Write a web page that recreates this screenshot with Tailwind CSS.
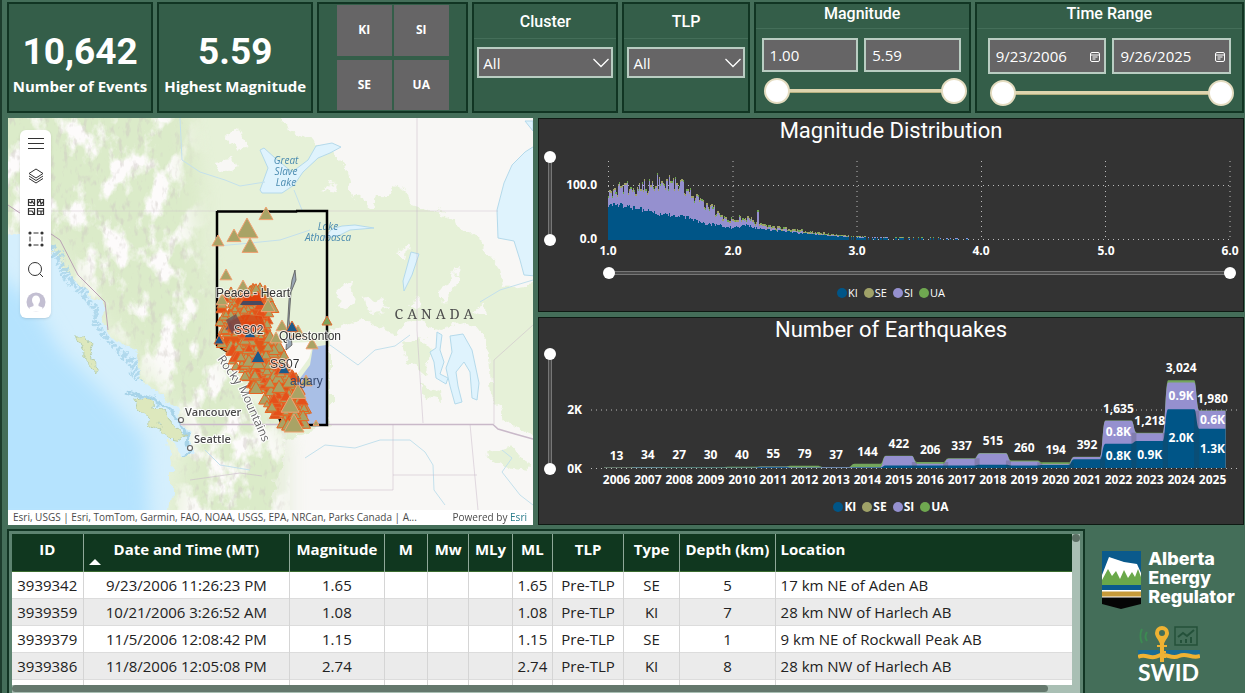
<!DOCTYPE html>
<html lang="en">
<head>
    <meta charset="UTF-8">
    <meta name="viewport" content="width=device-width, initial-scale=1.0">
    <title>Alberta Earthquake Dashboard</title>
    <script src="https://cdn.jsdelivr.net/npm/@tailwindcss/browser@4"></script>
</head>
<body class="bg-[#446e59] text-white font-['Open_Sans','Noto_Sans',sans-serif] border-l-2 border-[#1d3d2d] pl-[5px] pr-px pt-0.5 min-h-screen overflow-hidden">

    <!-- Cards and filters -->
    <section class="grid grid-cols-[minmax(0,146fr)_minmax(0,156fr)_minmax(0,151fr)_minmax(0,146fr)_minmax(0,127fr)_minmax(0,217fr)_minmax(0,269fr)] gap-1 h-[111px]">
        <div class="bg-[#345e49] border-2 border-[#113523] text-center whitespace-nowrap">
            <p class="font-['Roboto',sans-serif] font-bold text-[37px] leading-10 pt-7">10,642</p>
            <p class="font-bold text-[15px] leading-5 pt-1">Number of Events</p>
        </div>
        <div class="bg-[#345e49] border-2 border-[#113523] text-center whitespace-nowrap">
            <p class="font-['Roboto',sans-serif] font-bold text-[37px] leading-10 pt-7">5.59</p>
            <p class="font-bold text-[15px] leading-5 pt-1">Highest Magnitude</p>
        </div>
        <div class="bg-[#345e49] border-2 border-[#113523] flex justify-center">
            <div class="grid grid-cols-2 gap-x-0.5 gap-y-1 w-28 my-px text-xs font-bold">
                <button class="bg-[#666566]">KI</button>
                <button class="bg-[#666566]">SI</button>
                <button class="bg-[#666566]">SE</button>
                <button class="bg-[#666566]">UA</button>
            </div>
        </div>
        <div class="bg-[#345e49] border-2 border-[#113523]">
            <label for="cluster" class="block text-center font-['Roboto',sans-serif] font-medium text-base leading-6 pt-1.5 pb-1 border-b border-[#446e59]">Cluster</label>
            <div class="relative mx-[3px] mt-2">
                <select id="cluster" class="appearance-none w-full h-[31px] bg-[#666566] border-2 border-[#b9cdc2] pl-1 pt-0.5 text-[15px]"><option>All</option></select>
                <svg class="absolute right-1 top-2.5 w-4 h-3 pointer-events-none" viewBox="0 0 16 12" fill="none" stroke="#fff" stroke-width="1.3"><path d="M0.500 2 8 9.500 15.500 2"/></svg>
            </div>
        </div>
        <div class="bg-[#345e49] border-2 border-[#113523]">
            <label for="tlp" class="block text-center font-['Roboto',sans-serif] font-medium text-base leading-6 pt-1.5 pb-1 border-b border-[#446e59]">TLP</label>
            <div class="relative mx-[3px] mt-2">
                <select id="tlp" class="appearance-none w-full h-[31px] bg-[#666566] border-2 border-[#b9cdc2] pl-1 pt-0.5 text-[15px]"><option>All</option></select>
                <svg class="absolute right-1 top-2.5 w-4 h-3 pointer-events-none" viewBox="0 0 16 12" fill="none" stroke="#fff" stroke-width="1.3"><path d="M0.500 2 8 9.500 15.500 2"/></svg>
            </div>
        </div>
        <div class="bg-[#345e49] border-2 border-[#113523]">
            <h2 class="text-center font-['Roboto',sans-serif] font-medium text-base leading-5 pb-1 border-b border-[#446e59]">Magnitude</h2>
            <div class="flex gap-1.5 pl-1.5 pr-2 mt-[9px]">
                <input aria-label="Minimum magnitude" value="1.00" class="min-w-0 flex-1 h-[34px] bg-[#666566] border-2 border-[#b9cdc2] px-1.5 text-[15px]">
                <input aria-label="Maximum magnitude" value="5.59" class="min-w-0 flex-1 h-[34px] bg-[#666566] border-2 border-[#b9cdc2] px-1.5 text-[15px]">
            </div>
            <div class="relative h-[26px] mt-1.5 ml-2 mr-0.5">
                <div class="absolute inset-x-3 top-[11px] h-1 bg-[#ded4ae] border-b border-[#b5b080]"></div>
                <input type="range" aria-label="Magnitude from" value="0" class="absolute inset-0 w-full appearance-none bg-transparent pointer-events-none [&::-webkit-slider-thumb]:pointer-events-auto [&::-webkit-slider-thumb]:appearance-none [&::-webkit-slider-thumb]:size-[26px] [&::-webkit-slider-thumb]:rounded-full [&::-webkit-slider-thumb]:bg-white [&::-webkit-slider-thumb]:border-2 [&::-webkit-slider-thumb]:border-[#e4dcc0]">
                <input type="range" aria-label="Magnitude to" value="100" class="absolute inset-0 w-full appearance-none bg-transparent pointer-events-none [&::-webkit-slider-thumb]:pointer-events-auto [&::-webkit-slider-thumb]:appearance-none [&::-webkit-slider-thumb]:size-[26px] [&::-webkit-slider-thumb]:rounded-full [&::-webkit-slider-thumb]:bg-white [&::-webkit-slider-thumb]:border-2 [&::-webkit-slider-thumb]:border-[#e4dcc0]">
            </div>
        </div>
        <div class="bg-[#345e49] border-2 border-[#113523]">
            <h2 class="text-center font-['Roboto',sans-serif] font-medium text-base leading-5 pb-1 border-b border-[#446e59]">Time Range</h2>
            <div class="flex gap-1.5 px-[11px] mt-[9px]">
                <div class="relative flex-1">
                    <input aria-label="Start date" value="9/23/2006" class="w-full h-9 bg-[#666566] border-2 border-[#b9cdc2] px-1.5 text-[15px]">
                    <svg class="absolute right-1.5 top-3.5 size-2.5" viewBox="0 0 10 10" fill="none" stroke="#fff"><rect x=".5" y=".5" width="9" height="9" rx="1.500"/><path d="M1 3h8M2.500 5h5M2.500 7h3"/></svg>
                </div>
                <div class="relative flex-1">
                    <input aria-label="End date" value="9/26/2025" class="w-full h-9 bg-[#666566] border-2 border-[#b9cdc2] px-1.5 text-[15px]">
                    <svg class="absolute right-1.5 top-3.5 size-2.5" viewBox="0 0 10 10" fill="none" stroke="#fff"><rect x=".5" y=".5" width="9" height="9" rx="1.500"/><path d="M1 3h8M2.500 5h5M2.500 7h3"/></svg>
                </div>
            </div>
            <div class="relative h-[26px] mt-1.5 ml-[13px] mr-2">
                <div class="absolute inset-x-3 top-[11px] h-1 bg-[#ded4ae] border-b border-[#b5b080]"></div>
                <input type="range" aria-label="Time from" value="0" class="absolute inset-0 w-full appearance-none bg-transparent pointer-events-none [&::-webkit-slider-thumb]:pointer-events-auto [&::-webkit-slider-thumb]:appearance-none [&::-webkit-slider-thumb]:size-[26px] [&::-webkit-slider-thumb]:rounded-full [&::-webkit-slider-thumb]:bg-white [&::-webkit-slider-thumb]:border-2 [&::-webkit-slider-thumb]:border-[#e4dcc0]">
                <input type="range" aria-label="Time to" value="100" class="absolute inset-0 w-full appearance-none bg-transparent pointer-events-none [&::-webkit-slider-thumb]:pointer-events-auto [&::-webkit-slider-thumb]:appearance-none [&::-webkit-slider-thumb]:size-[26px] [&::-webkit-slider-thumb]:rounded-full [&::-webkit-slider-thumb]:bg-white [&::-webkit-slider-thumb]:border-2 [&::-webkit-slider-thumb]:border-[#e4dcc0]">
            </div>
        </div>
    </section>

    <section class="grid grid-cols-[526fr_706fr] gap-[5px] mt-[5px]">
        <!-- Map -->
        <div class="relative ml-px flex flex-col bg-white text-[#4b4b4b]">
            <svg class="w-full flex-1 min-h-0" viewBox="8 118 525 392" preserveAspectRatio="xMidYMid slice">
                <defs>
                    <filter id="rough" x="-5%" y="-5%" width="110%" height="110%">
                        <feTurbulence type="fractalNoise" baseFrequency="0.07" numOctaves="4" seed="3"/>
                        <feDisplacementMap in="SourceGraphic" scale="16" xChannelSelector="R" yChannelSelector="G"/>
                    </filter>
                    <filter id="snow" x="0" y="0" width="100%" height="100%">
                        <feGaussianBlur in="SourceGraphic" stdDeviation="12" result="area"/>
                        <feTurbulence type="fractalNoise" baseFrequency="0.04 0.026" numOctaves="5" seed="11"/>
                        <feColorMatrix values="0 0 0 0 .98  0 0 0 0 .965  0 0 0 0 .96  6 0 0 0 -2.9"/>
                        <feComposite in2="area" operator="in"/>
                    </filter>
                    <filter id="ridges" x="0" y="0" width="100%" height="100%">
                        <feGaussianBlur in="SourceGraphic" stdDeviation="12" result="area"/>
                        <feTurbulence type="fractalNoise" baseFrequency="0.16 0.08" numOctaves="3" seed="5"/>
                        <feColorMatrix values="0 0 0 0 .62  0 0 0 0 .58  0 0 0 0 .55  0 5 0 0 -2.8"/>
                        <feComposite in2="area" operator="in"/>
                    </filter>
                    <filter id="soft"><feGaussianBlur stdDeviation="9"/></filter>
                </defs>
                <rect x="8" y="118" width="525" height="400" fill="#f8f7f5"/>
                <!-- forest -->
                <g fill="#e6f1d8" filter="url(#rough)">
                    <path d="M-10 100H268L282 122 325 148 345 165 352 195 368 206 385 192 402 186 412 204 438 212 462 228 480 240 498 262 505 288 550 282V450L505 420 492 395 488 345 470 322 440 330 412 322 395 333 360 318 330 330V425L285 440 278 480 262 530H-10z"/>
                    <path d="M402 345 420 338 432 350 425 375 408 362zM420 385 440 390 442 402 425 398zM485 455 512 445 530 470 512 468z"/>
                </g>
                <path d="M-20 90H185L205 200 200 240 217 300 217 345 250 400 290 440 290 540H170L190 430 100 310 60 250 -20 225z" fill="#c9e0b0" opacity=".35" filter="url(#soft)"/>
                <path d="M-30 80H180L190 200 198 250 214 300 217 345 250 400 290 440 280 550H170L190 430 100 310 60 250 -30 225z" filter="url(#snow)"/>
                <path d="M-30 80H180L190 200 198 250 214 300 217 345 250 400 290 440 280 550H170L190 430 100 310 60 250 -30 225z" filter="url(#ridges)" opacity=".45"/>
                <g fill="#f8f7f5" filter="url(#rough)">
                    <path d="M226 136 238 126 250 146 236 154zM214 160 232 158 236 168 220 174zM322 190 334 182 336 192zM396 252 408 244 406 262z"/>
                    <path d="M338 290 350 280 356 300 342 306zM366 300 384 296 388 312 370 314zM442 290 458 266 456 290 444 304zM404 304 420 298 418 308zM470 312 486 300 488 316z"/>
                </g>
                <!-- ocean -->
                <path d="M-10 228 20 238 48 240 62 265 85 292 104 302 108 332 130 348 142 380 160 396 178 408 186 430 192 452 182 456 173 442 168 436 172 470 172 495 168 530H-10z" fill="#d5effd" filter="url(#rough)"/>
                <path d="M-20 260 30 300 60 350 110 400 145 440 150 530H-20z" fill="#b5e3fe" filter="url(#soft)"/>
                <g fill="none" stroke="#a7d3e8" stroke-width="3" filter="url(#rough)">
                    <path d="M52 246 70 280 92 305 102 335 128 360 140 382" stroke-dasharray="4 2" stroke-width="8" opacity=".8"/>
                    <path d="M128 392 155 400 180 418 188 448 184 456"/>
                </g>
                <g fill="#dde8bd" stroke="#b9cfae" stroke-width="1" filter="url(#rough)">
                    <path d="M133 398 150 400 164 412 176 428 186 440 170 437 152 424z"/>
                    <path d="M76 334 86 334 90 348 98 374 86 360z"/>
                </g>
                <!-- lakes -->
                <g fill="#dff3fd" stroke="#b4d9ea" stroke-width="1">
                    <path d="M260 190 268 168 260 150 264 148 275 158 292 172 308 160 316 146 332 143 341 147 330 153 318 158 303 172 294 185 282 193 262 193z"/>
                    <path d="M324 238 332 229 342 226 355 225 374 228 350 230 338 236z"/>
                    <path d="M411 252 419 254 412 275 404 291 403 281z"/>
                    <path d="M536 145 525 152 512 165 504 183 497 210 498 238 514 241 520 260 524 275 536 276z"/>
                    <path d="M450 336 463 334 472 350 479 383 477 400 472 398 470 372 464 362 456 372 458 386 462 402 455 404 450 386 446 368 452 352z"/>
                    <path d="M437 332 442 335 440 350 444 362 440 374 448 378 446 384 436 378 434 362 430 352 436 348z"/>
                    <path d="M525 121 533 121V131z"/>
                </g>
                <g fill="none" stroke="#c3e0ec">
                    <path d="M180 118 182 160 200 172 225 180 240 186 265 182"/>
                    <path d="M294 190 302 210M217 246 240 244 280 240 310 230"/>
                    <path d="M330 345 358 365 375 350 395 346 410 335"/>
                    <path d="M305 458 325 445 355 448 380 440 410 440 425 452 433 465 434 490 445 505"/>
                    <path d="M480 302 500 290 533 280M502 450 512 458 502 472 520 495 533 505"/>
                    <path d="M205 450 220 465 250 470"/>
                </g>
                <!-- borders and graticule -->
                <g fill="none" stroke="#c9b9c9">
                    <path d="M180 424.500H493L498 429 515 434 533 439" stroke-width="1.500"/>
                    <path d="M417 118V330L423 423M494 424V360L533 325M393 424V490M393 475H477M470 424 478 510M320 490H393" opacity=".5"/>
                    <path d="M8 211H217M327 211H498" opacity=".4"/>
                    <path d="M8 205 60 240 78 275 105 302 108 330" stroke="#b9a0b4"/>
                    <path d="M190 480 240 473 262 476" opacity=".6"/>
                </g>
                <!-- basemap names -->
                <g font-family="Open Sans, sans-serif" font-size="10" font-style="italic" fill="#4a8bb0" text-anchor="middle">
                    <text x="286" y="164">Great</text><text x="286" y="175">Slave</text><text x="286" y="186">Lake</text>
                    <text x="328" y="230">Lake</text><text x="328" y="241">Athabasca</text>
                </g>
                <text x="436" y="319" class="tracking-[4px]" text-anchor="middle" font-family="Noto Serif, Liberation Serif, serif" font-size="14" fill="#4e4e4e">CANADA</text>
                <!-- Alberta -->
                <path d="M326 345 313 347 310 365 295 385 300 425H327z" fill="#a9bfe6"/>
                <path d="M280 343 314 342 309 358 296 376 285 375z" fill="#fbfaf8"/>
                <path d="M217 211.500H296V210.500M296 211H327V425H282L276 410M217 211V345L240 360" fill="none" stroke="#000" stroke-width="2.500"/>
                <path d="M295 270 296 280 291 292 289 320 292 345 286 350 289 300 292 280z" fill="#9aa7b5" stroke="#555" stroke-width=".8"/>
                <path id="rockies" d="M217 359 240 391 263 443" fill="none"/>
                <text font-family="Open Sans, sans-serif" font-size="12" fill="#666" stroke="#fff" stroke-width="2" paint-order="stroke"><textPath href="#rockies">Rocky Mountains</textPath></text>
                <g id="quakes" stroke="#e06a30" stroke-width="1" fill="#a9a365"></g>
                <g font-family="Open Sans, sans-serif" font-size="11" font-weight="600" fill="#4a4a4a" stroke="#fff" stroke-width="2" paint-order="stroke">
                    <text x="185" y="416">Vancouver</text>
                    <text x="194" y="443">Seattle</text>
                </g>
                <g fill="#fff" stroke="#666" stroke-width="1.200"><circle cx="181" cy="420" r="2.500"/><circle cx="190" cy="448" r="2.500"/></g>
                <g font-family="Liberation Sans, sans-serif" font-size="12" fill="#333" stroke="#fff" stroke-opacity=".7" stroke-width="2" paint-order="stroke">
                    <text x="216" y="297">Peace - Heart</text>
                    <text x="234" y="334">SS02</text>
                    <text x="279" y="340">Questonton</text>
                    <text x="270" y="368">SS07</text>
                    <text x="290" y="385" fill="#34496f" stroke="none">algary</text>
                </g>
            </svg>
            <div class="flex justify-between gap-2 h-[15px] text-[10px] leading-[14px] pl-[5px] pr-1.5 whitespace-nowrap">
                <span class="truncate min-w-0">Esri, USGS | Esri, TomTom, Garmin, FAO, NOAA, USGS, EPA, NRCan, Parks Canada | A...</span>
                <span class="shrink-0">Powered by <a href="#" class="text-[#2a7d8c]">Esri</a></span>
            </div>
            <!-- Map tools -->
            <div class="absolute left-3 top-3 w-[31px] h-[188px] bg-white rounded-md shadow flex flex-col items-center justify-between pt-1 pb-1.5 text-[#333]">
                <button aria-label="Legend" class="size-5"><svg class="size-5" viewBox="0 0 20 20" fill="none" stroke="currentColor"><path d="M2 4.500h16M2 9.500h16M2 14.500h16"/></svg></button>
                <button aria-label="Layers" class="size-5"><svg class="size-5" viewBox="0 0 20 20" fill="none" stroke="currentColor"><path d="M10 3 17 7.500 10 12 3 7.500zM3 10l7 4.500 7-4.500M3 12.500l7 4.500 7-4.500"/></svg></button>
                <button aria-label="Basemap" class="size-5"><svg class="size-5" viewBox="0 0 20 20" fill="none" stroke="currentColor" stroke-width="1.200"><path d="M2.500 2.500h6v6h-6zM11.500 2.500h6v6h-6zM2.500 11.500h6v6h-6zM11.500 11.500h6v6h-6z"/><path d="M3 5l2 1 1-2 2 3M12 6l2-3 1 4 2-2M3 14h3l2 3M12 14h5M15 14v3"/></svg></button>
                <button aria-label="Select" class="size-5"><svg class="size-5" viewBox="0 0 20 20" fill="none" stroke="currentColor"><path d="M7.500 4h5M7.500 16h5M4 7.500v5M16 7.500v5"/><g fill="currentColor" stroke="none"><circle cx="4" cy="4" r="1.600"/><circle cx="16" cy="4" r="1.600"/><circle cx="4" cy="16" r="1.600"/><circle cx="16" cy="16" r="1.600"/></g></svg></button>
                <button aria-label="Search" class="size-5"><svg class="size-5" viewBox="0 0 20 20" fill="none" stroke="currentColor"><circle cx="9" cy="9" r="6.500"/><path d="M13.500 13.500 17 17"/></svg></button>
                <button aria-label="Account" class="size-5"><svg class="size-5" viewBox="0 0 20 20"><circle cx="10" cy="10" r="9.500" fill="#c3bfd2"/><path d="M10 3.500a4 4.500 0 0 1 4 4.500c0 2-.8 3.200-1.500 4v2l4 1.500v4H3.500v-4l4-1.500v-2C6.800 11.200 6 10 6 8a4 4.500 0 0 1 4-4.500z" fill="#fff"/></svg></button>
            </div>
        </div>

        <!-- Charts -->
        <div class="flex flex-col gap-[5px] min-w-0">
            <div class="bg-[#333] border border-[#0e1a13] pb-[11px]">
                <h2 class="h-8 text-center font-['Roboto',sans-serif] text-[22px] leading-6">Magnitude Distribution</h2>
                <div class="flex gap-[5px] pl-[5px]">
                    <div class="relative w-3 h-[95px]">
                        <div class="absolute inset-y-1.5 inset-x-[4px] bg-[#4a4a4a] border-x border-[#777]"></div>
                        <input type="range" aria-label="Count axis start" value="0" class="absolute inset-0 w-3 h-full [writing-mode:vertical-lr] appearance-none bg-transparent pointer-events-none [&::-webkit-slider-thumb]:pointer-events-auto [&::-webkit-slider-thumb]:appearance-none [&::-webkit-slider-thumb]:size-3 [&::-webkit-slider-thumb]:rounded-full [&::-webkit-slider-thumb]:bg-white">
                        <input type="range" aria-label="Count axis end" value="100" class="absolute inset-0 w-3 h-full [writing-mode:vertical-lr] appearance-none bg-transparent pointer-events-none [&::-webkit-slider-thumb]:pointer-events-auto [&::-webkit-slider-thumb]:appearance-none [&::-webkit-slider-thumb]:size-3 [&::-webkit-slider-thumb]:rounded-full [&::-webkit-slider-thumb]:bg-white">
                    </div>
                    <svg class="flex-1 min-w-0" viewBox="561 151 682 109" font-family="Open Sans, sans-serif" font-size="12" font-weight="700" fill="#fff">
                        <path d="M608.500 161V239M733 161V239M857 161V239M981.500 161V239M1105.500 161V239M1230 161V239M608 185.500H1230M608 239.500H1230" fill="none" stroke="#bbb" stroke-dasharray="1 4"/>
                        <g id="histogram" shape-rendering="crispEdges"></g>
                        <g text-anchor="end"><text x="597" y="189">100.0</text><text x="597" y="243">0.0</text></g>
                        <g text-anchor="middle">
                            <text x="608" y="255">1.0</text><text x="733" y="255">2.0</text><text x="857" y="255">3.0</text>
                            <text x="981" y="255">4.0</text><text x="1106" y="255">5.0</text><text x="1230" y="255">6.0</text>
                        </g>
                    </svg>
                </div>
                <div class="relative h-3 my-[7px] ml-16 mr-[7px]">
                    <div class="absolute inset-x-1.5 inset-y-[4px] bg-[#4a4a4a] border-y border-[#777]"></div>
                    <input type="range" aria-label="Magnitude axis start" value="0" class="absolute inset-0 w-full h-3 appearance-none bg-transparent pointer-events-none [&::-webkit-slider-thumb]:pointer-events-auto [&::-webkit-slider-thumb]:appearance-none [&::-webkit-slider-thumb]:size-3 [&::-webkit-slider-thumb]:rounded-full [&::-webkit-slider-thumb]:bg-white">
                    <input type="range" aria-label="Magnitude axis end" value="100" class="absolute inset-0 w-full h-3 appearance-none bg-transparent pointer-events-none [&::-webkit-slider-thumb]:pointer-events-auto [&::-webkit-slider-thumb]:appearance-none [&::-webkit-slider-thumb]:size-3 [&::-webkit-slider-thumb]:rounded-full [&::-webkit-slider-thumb]:bg-white">
                </div>
                <ul class="flex justify-center gap-1.5 h-3.5 text-[11px] leading-[14px]">
                    <li class="flex items-center gap-px"><i class="size-2.5 rounded-full bg-[#005587]"></i>KI</li>
                    <li class="flex items-center gap-px"><i class="size-2.5 rounded-full bg-[#a0a268]"></i>SE</li>
                    <li class="flex items-center gap-px"><i class="size-2.5 rounded-full bg-[#9590cf]"></i>SI</li>
                    <li class="flex items-center gap-px"><i class="size-2.5 rounded-full bg-[#6fa850]"></i>UA</li>
                </ul>
            </div>

            <div class="bg-[#333] border border-[#0e1a13] pb-[5px]">
                <h2 class="h-[30px] text-center font-['Roboto',sans-serif] text-[22px] leading-6">Number of Earthquakes</h2>
                <div class="flex gap-[5px] pl-[5px]">
                    <div class="relative w-3 h-[127px]">
                        <div class="absolute inset-y-1.5 inset-x-[4px] bg-[#4a4a4a] border-x border-[#777]"></div>
                        <input type="range" aria-label="Events axis start" value="0" class="absolute inset-0 w-3 h-full [writing-mode:vertical-lr] appearance-none bg-transparent pointer-events-none [&::-webkit-slider-thumb]:pointer-events-auto [&::-webkit-slider-thumb]:appearance-none [&::-webkit-slider-thumb]:size-3 [&::-webkit-slider-thumb]:rounded-full [&::-webkit-slider-thumb]:bg-white">
                        <input type="range" aria-label="Events axis end" value="100" class="absolute inset-0 w-3 h-full [writing-mode:vertical-lr] appearance-none bg-transparent pointer-events-none [&::-webkit-slider-thumb]:pointer-events-auto [&::-webkit-slider-thumb]:appearance-none [&::-webkit-slider-thumb]:size-3 [&::-webkit-slider-thumb]:rounded-full [&::-webkit-slider-thumb]:bg-white">
                    </div>
                    <svg class="flex-1 min-w-0" viewBox="561 348 682 147" font-family="Open Sans, sans-serif" font-size="12" font-weight="700" fill="#fff">
                        <path d="M591 410H1238M591 468.500H1238" fill="none" stroke="#bbb" stroke-dasharray="1 4"/>
                        <g id="ribbons"></g>
                        <g text-anchor="end"><text x="582" y="414">2K</text><text x="582" y="473">0K</text></g>
                        <g id="yearLabels" text-anchor="middle"></g>
                    </svg>
                </div>
                <ul class="flex justify-center gap-1.5 h-6 text-xs leading-6 font-bold">
                    <li class="flex items-center gap-px"><i class="size-2.5 rounded-full bg-[#005587]"></i>KI</li>
                    <li class="flex items-center gap-px"><i class="size-2.5 rounded-full bg-[#a0a268]"></i>SE</li>
                    <li class="flex items-center gap-px"><i class="size-2.5 rounded-full bg-[#9590cf]"></i>SI</li>
                    <li class="flex items-center gap-px"><i class="size-2.5 rounded-full bg-[#6fa850]"></i>UA</li>
                </ul>
            </div>
        </div>
    </section>

    <section class="grid grid-cols-[1078fr_159fr] mt-1">
        <!-- Event table -->
        <div class="bg-[#5d8370] border-2 border-b-0 border-[#113523] p-[3px] pb-0">
            <div class="flex h-[151px] bg-[#a9bfb4]">
                <div class="flex-1 min-w-0 overflow-hidden bg-white">
                    <table class="w-full table-fixed border-collapse text-[15px] text-[#222] text-center whitespace-nowrap">
                        <colgroup>
                            <col class="w-[6.700%]"><col class="w-[19.500%]"><col class="w-[8.900%]"><col class="w-[4.100%]"><col class="w-[3.900%]"><col class="w-[4.100%]">
                            <col class="w-[3.800%]"><col class="w-[6.700%]"><col class="w-[5.300%]"><col class="w-[9%]"><col>
                        </colgroup>
                        <thead class="bg-[#10371f] text-white">
                            <tr class="h-[37px] align-top leading-[30px] divide-x divide-[#8fa899] border-b border-[#3a6b2f]">
                                <th>ID</th>
                                <th class="relative">Date and Time (MT)<svg class="absolute left-[5px] bottom-1.5 w-3 h-1.5" viewBox="0 0 12 6" fill="#fff"><path d="M0 6 6 0 12 6z"/></svg></th>
                                <th>Magnitude</th><th>M</th><th>Mw</th><th>MLy</th><th>ML</th><th>TLP</th><th>Type</th><th>Depth (km)</th>
                                <th class="text-left pl-[5px]">Location</th>
                            </tr>
                        </thead>
                        <tbody id="events"></tbody>
                    </table>
                </div>
                <div class="w-2 bg-[#a9bfb4] rounded-full"><div class="size-2 rounded-full bg-[#5c6f65]"></div></div>
            </div>
            <div class="h-2 bg-[#a9bfb4]"><div class="h-[7px] w-[97%] rounded-full bg-[#64786d]"></div></div>
        </div>

        <!-- Logos -->
        <div class="flex flex-col items-center pt-5 pl-2">
            <div class="flex gap-[7px] items-start font-['Inter',sans-serif] font-extrabold text-[18px] leading-[19px]">
                <svg class="w-[39px] h-[58px] mt-0.5 shrink-0" viewBox="0 0 39 58">
                    <path d="M0 0h39v42H0z" fill="#0a5a8c"/>
                    <path d="M0 24 7 6l15 5 13 2 4 9v13H0z" fill="#fff"/>
                    <path d="M0 34 0 29 6 18l4 7 4-5 4 8 4-9 4 8 4-6 3 5 3-8 3 8v8H0z" fill="#6aa84a"/>
                    <path d="M0 34h39v5H0z" fill="#0a5a8c"/>
                    <path d="M0 39h39v8H0z" fill="#fff"/><path d="M0 40.500h39v5H0z" fill="#c69a3a"/>
                    <path d="M0 46.500h39V53l-20 5-19-5z" fill="#050505"/>
                </svg>
                <p>Alberta<br>Energy<br>Regulator</p>
            </div>
            <div class="flex flex-col items-center mt-[17px]">
                <svg class="w-[62px] h-9" viewBox="0 0 62 36" fill="none">
                    <path d="M4 3c-2 4-2 10 0 14M9 6c-2 3-2 6 0 9" stroke="#3c8a52" stroke-width="2"/>
                    <path d="M37 1h22v18H37z" stroke="#24513a" stroke-width="1.500"/>
                    <path d="M40 11l5-4 4 3 7-6M43 17v-3M48 17v-4M53 17v-6" stroke="#24513a" stroke-width="2"/>
                    <path d="M0 24h20l4 3 4-3h34v7c-9 3-13-3-20 0s-14-3-20 0-12-3-22 0z" fill="#1b6c93"/>
                    <path d="M0 31c8-4 12 3 20-1s13 4 21 0 12 3 21 0" stroke="#efb233" stroke-width="4"/>
                    <path d="M24 0a7 7 0 0 1 7 7c0 4-4 7-5 11v18h-4V18c-1-4-5-7-5-11a7 7 0 0 1 7-7zm0 4a3 3 0 1 0 0 6 3 3 0 0 0 0-6z" fill="#efb233" fill-rule="evenodd"/>
                    <path d="M19 20h10M22 26h6M22 31h6" stroke="#efb233" stroke-width="2"/>
                </svg>
                <p class="font-['Lato',sans-serif] font-bold text-[23px] leading-5">SWID</p>
            </div>
        </div>
    </section>

    <script>
        // small seeded generator so that the plots look the same on each load
        let seed = 42;
        function rand() {
            seed = (seed * 1664525 + 1013904223) % 4294967296;
            return seed / 4294967296;
        }

        function lerp(points, x) {
            for (let i = 1; i < points.length; i++) {
                const [x0, y0] = points[i - 1], [x1, y1] = points[i];
                if (x <= x1) return y0 + (y1 - y0) * (x - x0) / (x1 - x0);
            }
            return points[points.length - 1][1];
        }

        // Earthquake triangles
        function triangle(x, y, s, extra = "") {
            return `<path d="M${x} ${y - s}L${x + s} ${y + s * 0.8}H${x - s}z" ${extra}/>`;
        }
        const left = [[285, 240], [300, 220], [340, 219], [370, 236], [385, 252], [400, 264], [428, 286]];
        const right = [[285, 258], [300, 274], [330, 266], [345, 282], [370, 292], [385, 300], [410, 306], [428, 306]];
        let quakes = `<path d="M240 294 262 292 270 310 262 330 285 350 290 375 300 400 298 425 288 422 268 395 250 375 224 345 222 318z" fill="#e0561a" stroke="none"/>`;
        for (let i = 0; i < 330; i++) {
            const y = 287 + rand() * 139;
            const l = lerp(left, y), r = lerp(right, y);
            quakes += triangle(Math.round(l + rand() * (r - l)), Math.round(y), 3 + rand() * 4, rand() < 0.2 ? 'fill="#e5501a"' : 'stroke="#e8621f"');
        }
        [[266, 214, 7], [247, 229, 11], [234, 236, 7], [250, 246, 8], [218, 241, 6], [226, 275, 6], [243, 286, 6], [268, 306, 7], [276, 338, 6], [282, 326, 6],
         [298, 332, 7], [312, 344, 6], [306, 381, 6], [316, 423, 3], [298, 392, 8], [294, 424, 10], [222, 300, 6], [290, 405, 9]]
            .forEach(([x, y, s]) => quakes += triangle(x, y, s, 'stroke="#f0a070"'));
        quakes += triangle(327, 321, 5, 'fill="#7da35a"');
        [[292, 327, 6], [258, 357, 7], [284, 369, 6], [250, 333, 6], [230, 326, 5], [219, 340, 5]]
            .forEach(([x, y, s]) => quakes += triangle(x, y, s, 'fill="#1b5a8a" stroke="#e86a30"'));
        quakes += '<path d="M240 304l8-12 4 5 6-6 6 13z" fill="#e0400c"/><path d="M240 305h24l-3-4h-18z" fill="#4a4a60" stroke="none"/><path d="M228 322l16-8 18 2 4 12-20 6-18-2z" fill="#e0400c" opacity=".8"/><path d="M226 320l10-6 5 10-9 10z" fill="#5c4a58" stroke="none" opacity=".7"/>';
        document.getElementById("quakes").innerHTML = quakes;

        // Magnitude histogram, pixel height by magnitude
        const kiCurve = [[1, 36], [1.2, 33], [1.4, 26], [1.6, 23], [1.8, 16], [2, 12], [2.1, 15], [2.2, 11], [2.5, 7], [2.75, 4], [3, 2], [3.5, 1.2], [4, 0.5], [4.5, 0]];
        const allCurve = [[1, 50], [1.15, 53], [1.35, 58], [1.5, 59], [1.65, 52], [1.75, 38], [1.85, 31], [1.95, 21], [2.1, 24], [2.25, 15], [2.5, 10], [2.75, 6], [3, 3], [3.5, 1.8], [4, 0.5], [4.5, 0]];
        let bars = "";
        for (let i = 0; i < 350; i++) {
            const m = 1 + i / 100, x = 608 + i * 1.244;
            let ki = lerp(kiCurve, m) * (0.88 + rand() * 0.2);
            let all = lerp(allCurve, m) * (0.82 + rand() * 0.3);
            if (i === 39) all = 67;
            if (i === 49) all = 65;
            if (i === 120) all = 30;
            all = Math.max(all, ki + 1);
            if (m > 2.9 && rand() < (m - 2.4) / 1.6) continue;
            const cap = Math.min(2, all * 0.2);
            bars += `<rect x="${x}" y="${239.5 - all}" width="1.3" height="${all}" fill="${i % 3 ? "#a0a268" : "#6fa850"}"/>`;
            bars += `<rect x="${x}" y="${239.5 - all + cap}" width="1.3" height="${all - cap}" fill="#9590cf"/>`;
            bars += `<rect x="${x}" y="${239.5 - ki}" width="1.3" height="${ki}" fill="#005587"/>`;
        }
        document.getElementById("histogram").innerHTML = bars;

        // Ribbon chart: year total, KI, SI; the rest is SE and UA
        const years = [
            [13, 0, 5], [34, 10, 10], [27, 5, 5], [30, 5, 5], [40, 5, 5], [55, 30, 10], [79, 10, 10], [37, 5, 25], [144, 20, 10], [422, 90, 320],
            [206, 90, 60], [337, 90, 230], [515, 110, 390], [260, 90, 130], [194, 100, 30], [392, 300, 80], [1635, 840, 790], [1218, 930, 270], [3024, 2030, 920], [1980, 1350, 620],
        ];
        const px = (v) => 468 - v * 0.029;
        const layers = [
            ["#74a65c", (y) => y[0]],
            ["#9590cf", (y) => y[1] + y[2]],
            ["#005587", (y) => y[1]],
        ];
        let ribbons = "";
        layers.forEach(([color, top]) => {
            let d = "M604 468";
            years.forEach((y, i) => {
                const x = 616.5 + i * 31.37, t = px(top(y));
                if (i) {
                    const p = px(top(years[i - 1]));
                    d += `C${x - 16} ${p} ${x - 16} ${t} ${x - 13} ${t}`;
                } else d += `L604 ${t}`;
                d += `H${x + 13}`;
            });
            ribbons += `<path d="${d}V468z" fill="${color}"/>`;
        });
        // darken the links between columns
        years.slice(9).forEach((y, k) => {
            const i = k + 9, x = 616.5 + i * 31.37;
            if (i < 19) {
                const low = Math.max(px(y[0]), px(years[i + 1][0]));
                ribbons += `<rect x="${x + 13}" y="${low}" width="5" height="${468 - low}" fill="#333" opacity=".2"/>`;
            }
        });
        document.getElementById("ribbons").innerHTML = ribbons;

        let labels = "";
        years.forEach((y, i) => {
            const x = 616.5 + i * 31.37;
            labels += `<text x="${x}" y="484">${2006 + i}</text>`;
            labels += `<text x="${x}" y="${px(y[0]) - 8}">${y[0].toLocaleString("en-US")}</text>`;
        });
        [[16, 436, "0.8K"], [16, 460, "0.8K"], [17, 459, "0.9K"], [18, 400, "0.9K"], [18, 442, "2.0K"], [19, 424, "0.6K"], [19, 453, "1.3K"]]
            .forEach(([i, y, text]) => labels += `<text x="${616.5 + i * 31.37}" y="${y}">${text}</text>`);
        document.getElementById("yearLabels").innerHTML = labels;

        // Table rows
        const events = [
            ["3939342", "9/23/2006 11:26:23 PM", "1.65", "", "", "", "1.65", "Pre-TLP", "SE", "5", "17 km NE of Aden AB"],
            ["3939359", "10/21/2006 3:26:52 AM", "1.08", "", "", "", "1.08", "Pre-TLP", "KI", "7", "28 km NW of Harlech AB"],
            ["3939379", "11/5/2006 12:08:42 PM", "1.15", "", "", "", "1.15", "Pre-TLP", "SE", "1", "9 km NE of Rockwall Peak AB"],
            ["3939386", "11/8/2006 12:05:08 PM", "2.74", "", "", "", "2.74", "Pre-TLP", "KI", "8", "28 km NW of Harlech AB"],
            ["", "", "", "", "", "", "", "", "", "", ""],
        ];
        document.getElementById("events").innerHTML = events.map((row) =>
            `<tr class="h-[27px] leading-[26px] odd:bg-white even:bg-[#ebebeb] divide-x divide-[#d5d5d5] border-b border-[#dcdcdc]">` +
            row.map((cell, i) => `<td class="${i === 10 ? "text-left pl-[5px]" : ""}">${cell}</td>`).join("") + `</tr>`
        ).join("");
    </script>
</body>
</html>
